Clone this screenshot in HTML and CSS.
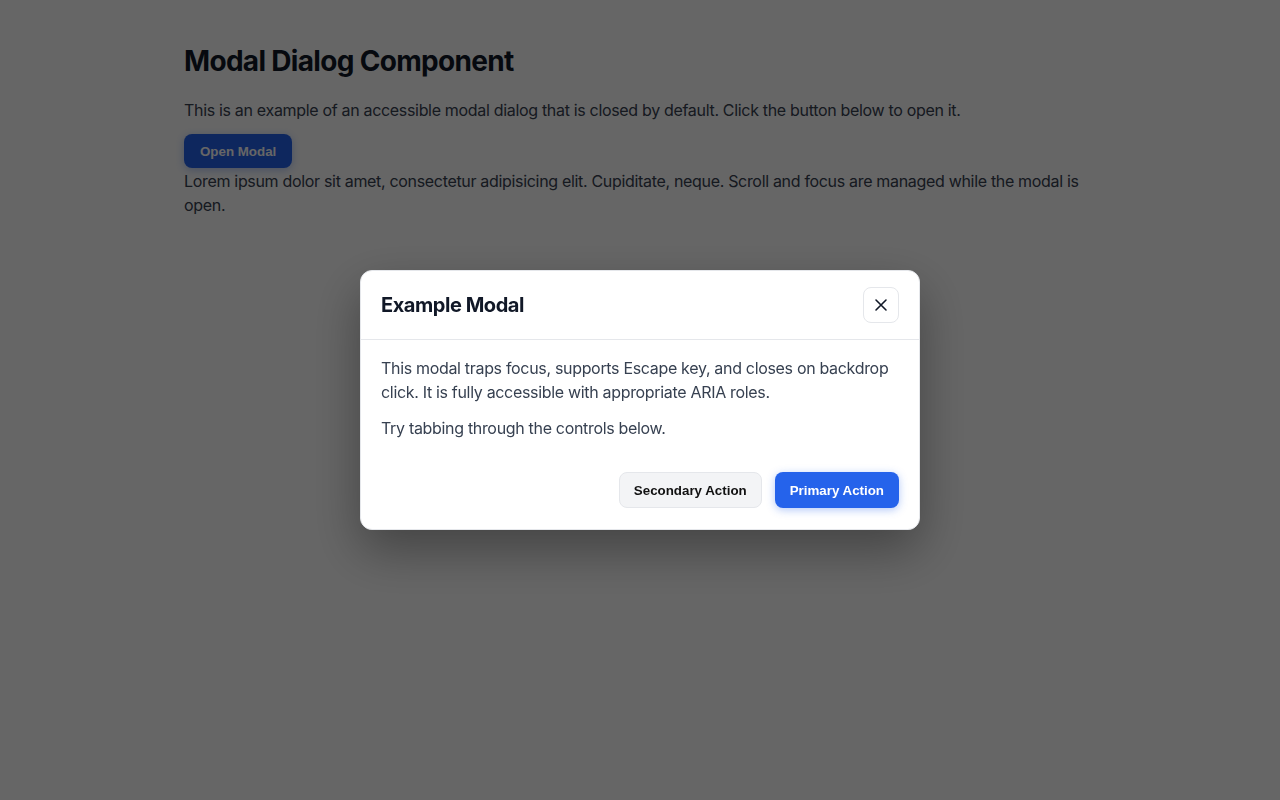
FILE: index.html
```html
<!DOCTYPE html>
<html lang="en">
<head>
<meta charset="utf-8">
<title>Modal Dialog Component</title>
<link rel="stylesheet" href="styles.css">
</head>
<body>
<main class="page">
  <h1 class="title">Modal Dialog Component</h1>
  <p class="text">This is an example of an accessible modal dialog that is closed by default. Click the button below to open it.</p>
  <button class="btn btn-primary" type="button">Open Modal</button>
  <p class="text">Lorem ipsum dolor sit amet, consectetur adipisicing elit. Cupiditate, neque. Scroll and focus are managed while the modal is open.</p>
</main>
<div class="backdrop">
  <div class="modal" role="dialog" aria-modal="true" aria-labelledby="modal-title">
    <header class="modal-header">
      <h2 class="modal-title" id="modal-title">Example Modal</h2>
      <button class="close-btn" type="button" aria-label="Close">
        <svg width="14" height="14" viewBox="0 0 14 14" aria-hidden="true"><path d="M2 2 L12 12 M12 2 L2 12" stroke="#111827" stroke-width="1.6" stroke-linecap="round" fill="none"/></svg>
      </button>
    </header>
    <div class="modal-body">
      <p class="text">This modal traps focus, supports Escape key, and closes on backdrop click. It is fully accessible with appropriate ARIA roles.</p>
      <p class="text">Try tabbing through the controls below.</p>
    </div>
    <footer class="modal-footer">
      <button class="btn btn-secondary" type="button">Secondary Action</button>
      <button class="btn btn-primary" type="button">Primary Action</button>
    </footer>
  </div>
</div>
</body>
</html>
```
FILE: styles.css
```css
* { box-sizing: border-box; }
html, body { margin: 0; padding: 0; }
body {
  font-family: Inter, "Noto Sans", sans-serif;
  color: #374151;
  background: #ffffff;
  height: 800px;
}
.page {
  max-width: 960px;
  margin: 0 auto;
  padding: 44px 24px;
}
.title {
  margin: 0 0 20px;
  font-size: 28px;
  line-height: 34px;
  font-weight: 700;
  color: #111827;
  letter-spacing: -0.68px;
}
.text {
  margin: 0 0 12px;
  font-size: 16px;
  line-height: 24px;
  letter-spacing: -0.32px;
}
.btn {
  font-family: "Liberation Sans", Arial, sans-serif;
  font-size: 13.333px;
  font-weight: 700;
  height: 36px;
  padding: 0 14px;
  border-radius: 8px;
  border: 1px solid transparent;
  cursor: pointer;
}
.page .btn { height: 34px; padding: 0 15px; display: block; margin-bottom: 1px; }
.btn-primary {
  background: #2563eb;
  color: #ffffff;
  box-shadow: 0 2px 8px rgba(37, 99, 235, 0.35);
}
.btn-secondary {
  background: #f3f4f6;
  color: #111111;
  border-color: #e5e7eb;
}
.backdrop {
  position: fixed;
  inset: 0;
  background: rgba(0, 0, 0, 0.6);
  display: flex;
  align-items: center;
  justify-content: center;
}
.modal {
  width: 560px;
  background: #ffffff;
  border: 1px solid #e5e7eb;
  border-radius: 12px;
  box-shadow: 0 20px 50px rgba(0, 0, 0, 0.35);
}
.modal-header {
  display: flex;
  align-items: center;
  justify-content: space-between;
  padding: 16px 20px;
  border-bottom: 1px solid #e5e7eb;
}
.modal-title {
  margin: 0;
  font-size: 20px;
  line-height: 28px;
  font-weight: 700;
  color: #111827;
  letter-spacing: -0.45px;
}
.close-btn {
  width: 36px;
  height: 36px;
  border: 1px solid #e5e7eb;
  border-radius: 8px;
  background: #ffffff;
  display: flex;
  align-items: center;
  justify-content: center;
  padding: 0;
}
.modal-body {
  padding: 16px 20px;
}
.modal-body .text:last-child { margin-bottom: 0; }
.modal-footer {
  display: flex;
  justify-content: flex-end;
  gap: 13px;
  padding: 16px 20px 21px;
}
```
